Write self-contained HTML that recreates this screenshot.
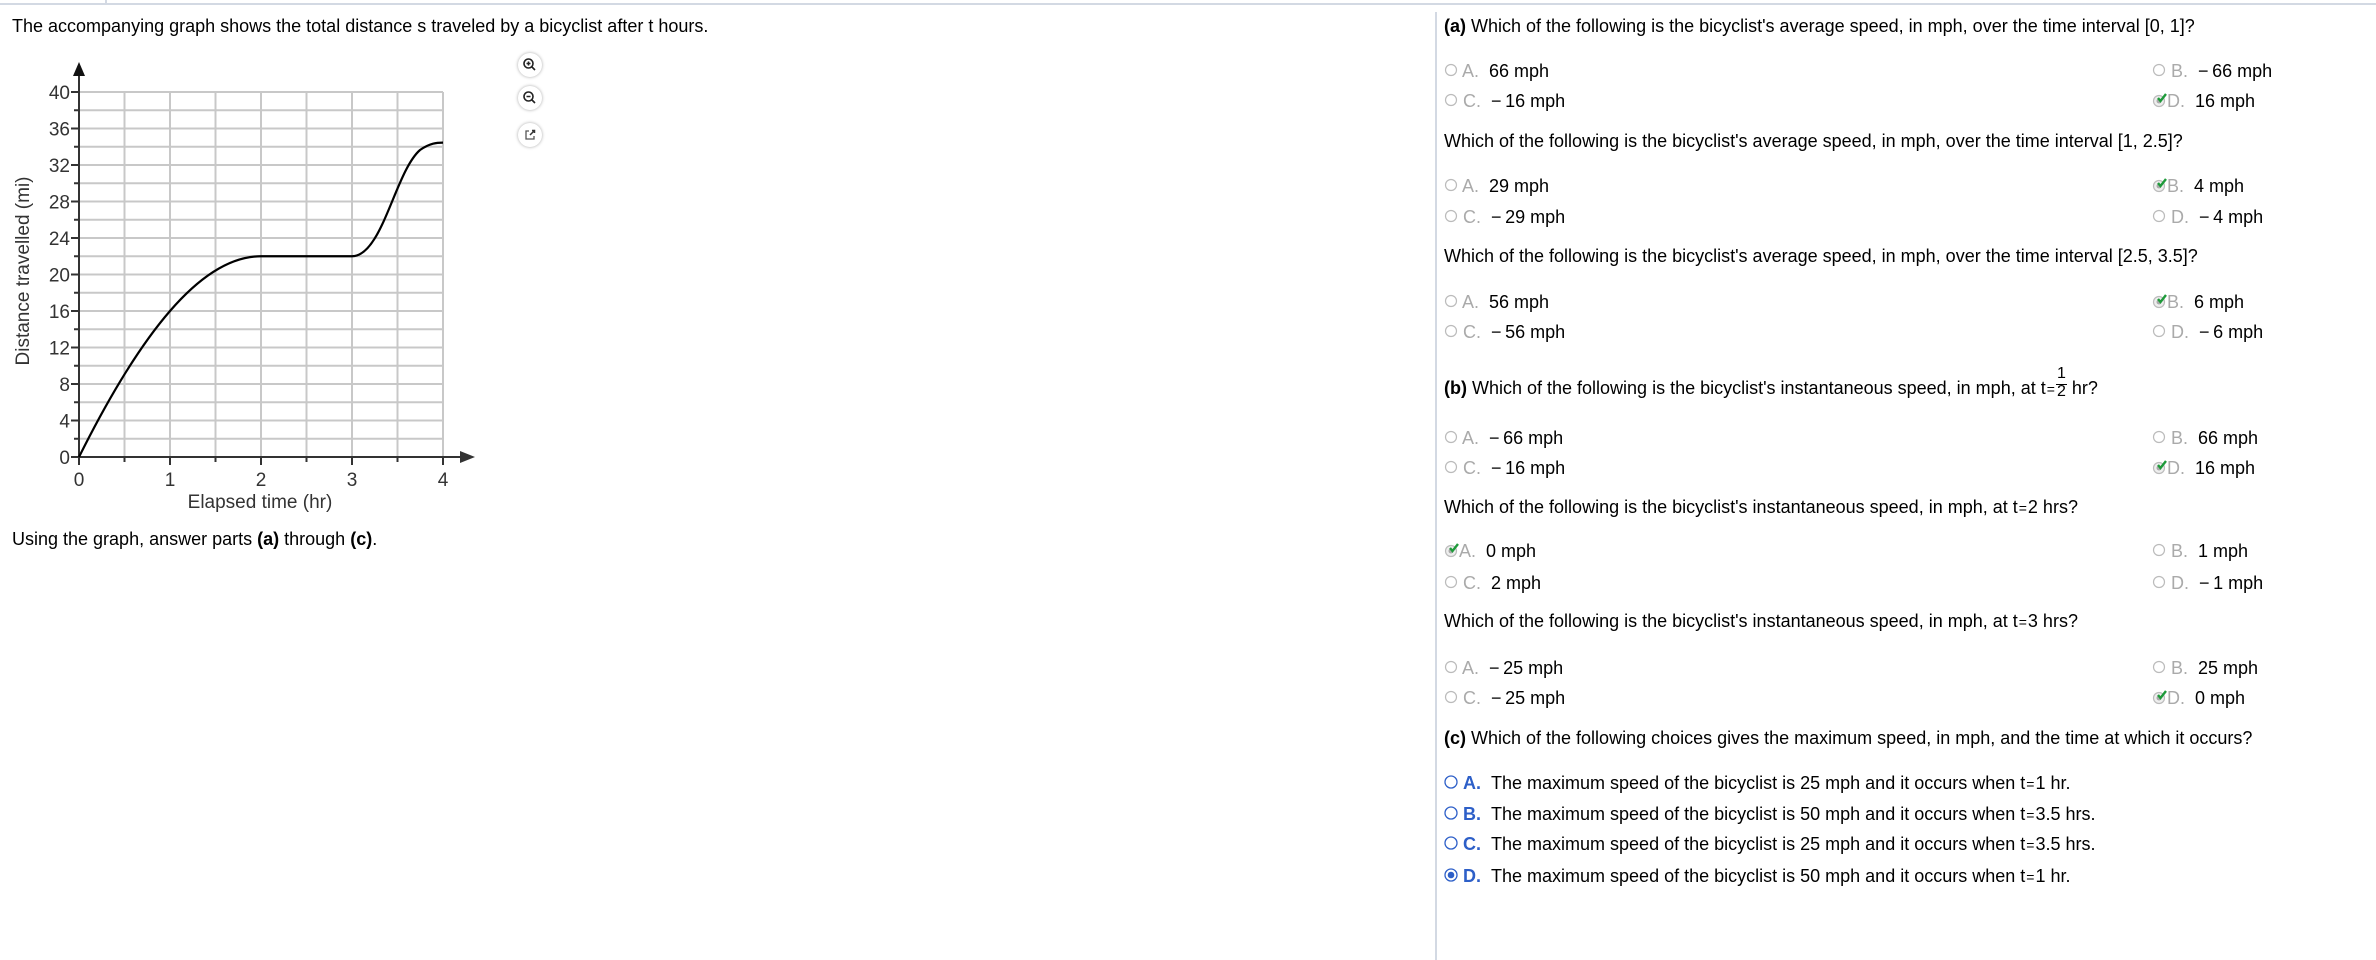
<!DOCTYPE html>
<html><head><meta charset="utf-8"><style>
*{margin:0;padding:0;box-sizing:border-box}
body{width:2376px;height:960px;background:#fff;font-family:"Liberation Sans",Arial,sans-serif;font-size:18px;color:#000;position:relative;overflow:hidden}
.t{position:absolute;white-space:nowrap;line-height:20px}
.g{color:#aaa}
.c{color:#2d5fc8;font-weight:bold}
.e{font-size:14px;padding:0 1px}
.ic{position:absolute;width:24px;height:24px;border-radius:50%;background:#fff;box-shadow:0 0 3px rgba(0,0,0,.35)}
</style></head><body>
<div style="position:absolute;left:0;top:3px;width:2376px;height:2px;background:#d3d9e3"></div>
<div style="position:absolute;left:105px;top:0;width:2px;height:4px;background:#d3d9e3"></div>
<div style="position:absolute;left:1435px;top:12px;width:2px;height:948px;background:#d3d9e3"></div>

<div class="t" style="left:12px;top:16px">The accompanying graph shows the total distance s traveled by a bicyclist after t hours.</div>
<div class="t" style="left:12px;top:529px">Using the graph, answer parts <b>(a)</b> through <b>(c)</b>.</div>

<svg style="position:absolute;left:0;top:0" width="560" height="520" font-family="Liberation Sans, Arial, sans-serif">
<g stroke="#c8c8c8" stroke-width="2">
<path d="M124.5,92V457M170,92V457M215.5,92V457M261,92V457M306.5,92V457M352,92V457M397.5,92V457M443,92V457"/>
<path d="M79,92H443M79,110.25H443M79,128.5H443M79,146.75H443M79,165H443M79,183.25H443M79,201.5H443M79,219.75H443M79,238H443M79,256.25H443M79,274.5H443M79,292.75H443M79,311H443M79,329.25H443M79,347.5H443M79,365.75H443M79,384H443M79,402.25H443M79,420.5H443M79,438.75H443"/>
</g>
<g stroke="#333" stroke-width="2">
<path d="M79,457V70M79,457H466"/>
<path d="M71,92H79M71,128.5H79M71,165H79M71,201.5H79M71,238H79M71,274.5H79M71,311H79M71,347.5H79M71,384H79M71,420.5H79M71,457H79"/>
<path d="M74,110.25H79M74,146.75H79M74,183.25H79M74,219.75H79M74,256.25H79M74,292.75H79M74,329.25H79M74,365.75H79M74,402.25H79M74,438.75H79"/>
<path d="M124.5,457V462M215.5,457V462M306.5,457V462M397.5,457V462M170,457V465M261,457V465M352,457V465M443,457V465M79,457V465"/>
</g>
<path d="M79,62L73,76H85Z" fill="#111"/>
<path d="M475,457L460,451V463Z" fill="#333"/>
<path d="M79,457C139.7,335.3 200.3,256.25 261,256.25H352C382.3,256.25 395,172 420,150C430,143 437,142.6 443,142.6" fill="none" stroke="#000" stroke-width="2.2"/>
<g font-size="19" fill="#333" text-anchor="end">
<text x="70" y="99">40</text><text x="70" y="135.5">36</text><text x="70" y="172">32</text><text x="70" y="208.5">28</text><text x="70" y="245">24</text><text x="70" y="281.5">20</text><text x="70" y="318">16</text><text x="70" y="354.5">12</text><text x="70" y="391">8</text><text x="70" y="427.5">4</text><text x="70" y="464">0</text>
</g>
<g font-size="19" fill="#333" text-anchor="middle">
<text x="79" y="486">0</text><text x="170" y="486">1</text><text x="261" y="486">2</text><text x="352" y="486">3</text><text x="443" y="486">4</text>
<text x="260" y="508">Elapsed time (hr)</text>
<text x="0" y="0" transform="translate(29,271) rotate(-90)">Distance travelled (mi)</text>
</g>
</svg>

<div class="ic" style="left:518px;top:53px"><svg width="24" height="24"><circle cx="10.5" cy="10.5" r="4.5" fill="none" stroke="#222" stroke-width="1.6"/><path d="M13.5,13.5L17,17M8.5,10.5H12.5M10.5,8.5V12.5" stroke="#222" stroke-width="1.6"/></svg></div>
<div class="ic" style="left:518px;top:86px"><svg width="24" height="24"><circle cx="10.5" cy="10.5" r="4.5" fill="none" stroke="#222" stroke-width="1.6"/><path d="M13.5,13.5L17,17M8.5,10.5H12.5" stroke="#222" stroke-width="1.6"/></svg></div>
<div class="ic" style="left:518px;top:123px"><svg width="24" height="24"><path d="M11,8H8V16H16V13" fill="none" stroke="#555" stroke-width="1.3"/><path d="M12,12L16.5,7.5M14,7.5H16.5V10" fill="none" stroke="#333" stroke-width="1.5"/></svg></div>

<svg width="0" height="0" style="position:absolute"><defs>
<g id="r"><circle cx="7" cy="7" r="5.5" fill="#fff" stroke="#bbb" stroke-width="1.2"/></g>
<g id="k"><circle cx="7" cy="8" r="5.5" fill="#eee" stroke="#bbb" stroke-width="1.2"/><circle cx="7" cy="8" r="2.5" fill="#aaa"/><path d="M6,5L8.5,8L14,1" fill="none" stroke="#1e9a3a" stroke-width="2.4"/></g>
<g id="b"><circle cx="7" cy="7" r="6" fill="#fff" stroke="#2d5fc8" stroke-width="1.3"/></g>
<g id="bd"><circle cx="7" cy="7" r="6" fill="#fff" stroke="#2d5fc8" stroke-width="1.3"/><circle cx="7" cy="7" r="3.3" fill="#2d5fc8"/></g>
</defs></svg>

<div class="t" style="left:1444px;top:16px"><b>(a)</b> Which of the following is the bicyclist's average speed, in mph, over the time interval [0, 1]?</div>
<div class="t" style="left:1444px;top:131px">Which of the following is the bicyclist's average speed, in mph, over the time interval [1, 2.5]?</div>
<div class="t" style="left:1444px;top:246px">Which of the following is the bicyclist's average speed, in mph, over the time interval [2.5, 3.5]?</div>
<div class="t" style="left:1444px;top:378px"><b>(b)</b> Which of the following is the bicyclist's instantaneous speed, in mph, at t<span class="e">=</span><span style="display:inline-block;position:relative;width:11px;vertical-align:-2px;text-align:center;font-size:16px"><span style="position:absolute;left:0;right:0;top:-20px">1</span><span style="display:block;border-top:1px solid #000;line-height:14px">2</span></span> hr?</div>
<div class="t" style="left:1444px;top:497px">Which of the following is the bicyclist's instantaneous speed, in mph, at t<span class="e">=</span>2 hrs?</div>
<div class="t" style="left:1444px;top:611px">Which of the following is the bicyclist's instantaneous speed, in mph, at t<span class="e">=</span>3 hrs?</div>
<div class="t" style="left:1444px;top:728px"><b>(c)</b> Which of the following choices gives the maximum speed, in mph, and the time at which it occurs?</div>

<div class="t" style="left:1444px;top:61px"><svg width="14" height="16" style="vertical-align:-2px"><use href="#r"/></svg><span class="g"> A.</span>&nbsp;&nbsp;66 mph</div>
<div class="t" style="left:2152px;top:61px"><svg width="14" height="16" style="vertical-align:-2px"><use href="#r"/></svg><span class="g"> B.</span>&nbsp;&nbsp;−&thinsp;66 mph</div>
<div class="t" style="left:1444px;top:91px"><svg width="14" height="16" style="vertical-align:-2px"><use href="#r"/></svg><span class="g"> C.</span>&nbsp;&nbsp;−&thinsp;16 mph</div>
<div class="t" style="left:2152px;top:91px"><svg width="15" height="16" style="vertical-align:-2px"><use href="#k"/></svg><span class="g">D.</span>&nbsp;&nbsp;16 mph</div>

<div class="t" style="left:1444px;top:176px"><svg width="14" height="16" style="vertical-align:-2px"><use href="#r"/></svg><span class="g"> A.</span>&nbsp;&nbsp;29 mph</div>
<div class="t" style="left:2152px;top:176px"><svg width="15" height="16" style="vertical-align:-2px"><use href="#k"/></svg><span class="g">B.</span>&nbsp;&nbsp;4 mph</div>
<div class="t" style="left:1444px;top:207px"><svg width="14" height="16" style="vertical-align:-2px"><use href="#r"/></svg><span class="g"> C.</span>&nbsp;&nbsp;−&thinsp;29 mph</div>
<div class="t" style="left:2152px;top:207px"><svg width="14" height="16" style="vertical-align:-2px"><use href="#r"/></svg><span class="g"> D.</span>&nbsp;&nbsp;−&thinsp;4 mph</div>

<div class="t" style="left:1444px;top:292px"><svg width="14" height="16" style="vertical-align:-2px"><use href="#r"/></svg><span class="g"> A.</span>&nbsp;&nbsp;56 mph</div>
<div class="t" style="left:2152px;top:292px"><svg width="15" height="16" style="vertical-align:-2px"><use href="#k"/></svg><span class="g">B.</span>&nbsp;&nbsp;6 mph</div>
<div class="t" style="left:1444px;top:322px"><svg width="14" height="16" style="vertical-align:-2px"><use href="#r"/></svg><span class="g"> C.</span>&nbsp;&nbsp;−&thinsp;56 mph</div>
<div class="t" style="left:2152px;top:322px"><svg width="14" height="16" style="vertical-align:-2px"><use href="#r"/></svg><span class="g"> D.</span>&nbsp;&nbsp;−&thinsp;6 mph</div>

<div class="t" style="left:1444px;top:428px"><svg width="14" height="16" style="vertical-align:-2px"><use href="#r"/></svg><span class="g"> A.</span>&nbsp;&nbsp;−&thinsp;66 mph</div>
<div class="t" style="left:2152px;top:428px"><svg width="14" height="16" style="vertical-align:-2px"><use href="#r"/></svg><span class="g"> B.</span>&nbsp;&nbsp;66 mph</div>
<div class="t" style="left:1444px;top:458px"><svg width="14" height="16" style="vertical-align:-2px"><use href="#r"/></svg><span class="g"> C.</span>&nbsp;&nbsp;−&thinsp;16 mph</div>
<div class="t" style="left:2152px;top:458px"><svg width="15" height="16" style="vertical-align:-2px"><use href="#k"/></svg><span class="g">D.</span>&nbsp;&nbsp;16 mph</div>

<div class="t" style="left:1444px;top:541px"><svg width="15" height="16" style="vertical-align:-2px"><use href="#k"/></svg><span class="g">A.</span>&nbsp;&nbsp;0 mph</div>
<div class="t" style="left:2152px;top:541px"><svg width="14" height="16" style="vertical-align:-2px"><use href="#r"/></svg><span class="g"> B.</span>&nbsp;&nbsp;1 mph</div>
<div class="t" style="left:1444px;top:573px"><svg width="14" height="16" style="vertical-align:-2px"><use href="#r"/></svg><span class="g"> C.</span>&nbsp;&nbsp;2 mph</div>
<div class="t" style="left:2152px;top:573px"><svg width="14" height="16" style="vertical-align:-2px"><use href="#r"/></svg><span class="g"> D.</span>&nbsp;&nbsp;−&thinsp;1 mph</div>

<div class="t" style="left:1444px;top:658px"><svg width="14" height="16" style="vertical-align:-2px"><use href="#r"/></svg><span class="g"> A.</span>&nbsp;&nbsp;−&thinsp;25 mph</div>
<div class="t" style="left:2152px;top:658px"><svg width="14" height="16" style="vertical-align:-2px"><use href="#r"/></svg><span class="g"> B.</span>&nbsp;&nbsp;25 mph</div>
<div class="t" style="left:1444px;top:688px"><svg width="14" height="16" style="vertical-align:-2px"><use href="#r"/></svg><span class="g"> C.</span>&nbsp;&nbsp;−&thinsp;25 mph</div>
<div class="t" style="left:2152px;top:688px"><svg width="15" height="16" style="vertical-align:-2px"><use href="#k"/></svg><span class="g">D.</span>&nbsp;&nbsp;0 mph</div>

<div class="t" style="left:1444px;top:773px"><svg width="14" height="16" style="vertical-align:-2px"><use href="#b"/></svg> <span class="c">A.</span>&nbsp;&nbsp;The maximum speed of the bicyclist is 25 mph and it occurs when t<span class="e">=</span>1 hr.</div>
<div class="t" style="left:1444px;top:804px"><svg width="14" height="16" style="vertical-align:-2px"><use href="#b"/></svg> <span class="c">B.</span>&nbsp;&nbsp;The maximum speed of the bicyclist is 50 mph and it occurs when t<span class="e">=</span>3.5 hrs.</div>
<div class="t" style="left:1444px;top:834px"><svg width="14" height="16" style="vertical-align:-2px"><use href="#b"/></svg> <span class="c">C.</span>&nbsp;&nbsp;The maximum speed of the bicyclist is 25 mph and it occurs when t<span class="e">=</span>3.5 hrs.</div>
<div class="t" style="left:1444px;top:866px"><svg width="14" height="16" style="vertical-align:-2px"><use href="#bd"/></svg> <span class="c">D.</span>&nbsp;&nbsp;The maximum speed of the bicyclist is 50 mph and it occurs when t<span class="e">=</span>1 hr.</div>
</body></html>
